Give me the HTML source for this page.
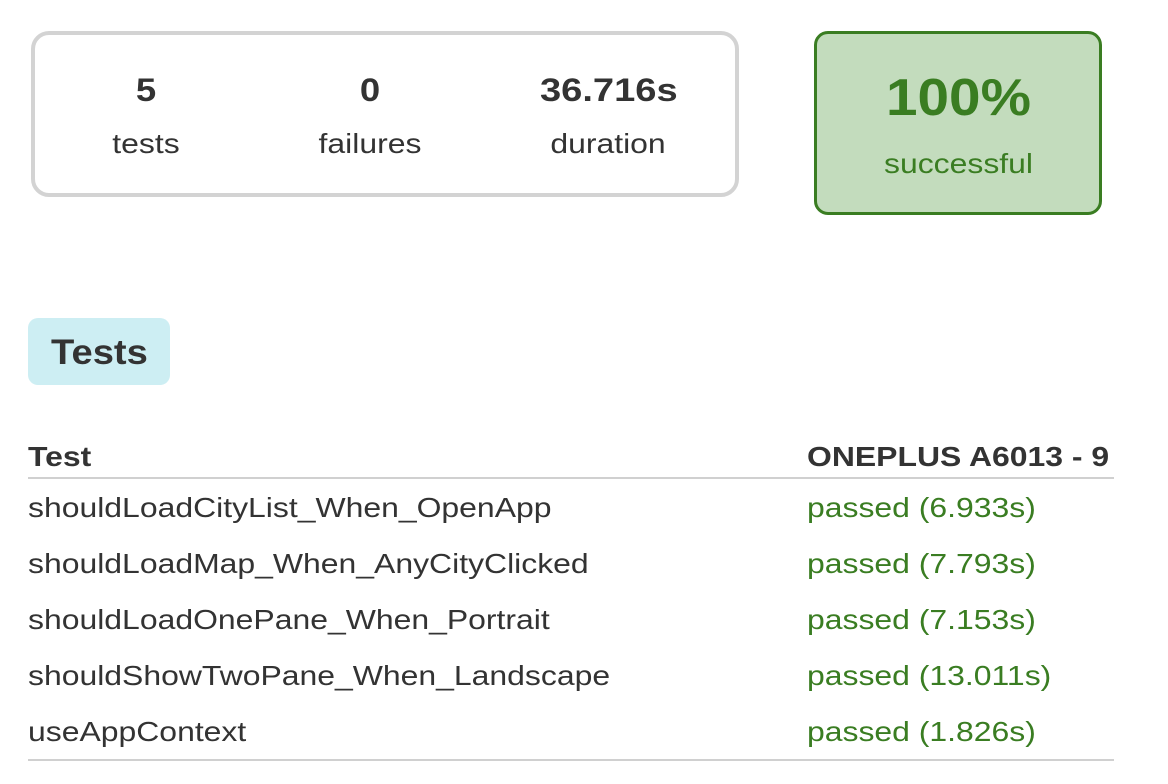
<!DOCTYPE html>
<html><head><style>
body{margin:0;width:1168px;height:784px;background:#fff;font-family:"Liberation Sans",Arial,sans-serif;color:#333;position:relative;overflow:hidden}
.a{position:absolute;white-space:nowrap;transform-origin:0 0;transform:scaleX(1.14)}
.c{transform-origin:0 0;transform:scaleX(1.14) translateX(-50%);text-align:center}
.g{color:#3a7d22}
.box{transform:none}
</style></head><body>
<div class="a box" style="left:31px;top:31px;width:700px;height:158px;border:4px solid #d3d3d3;border-radius:18px"></div>
<div class="a c" style="left:146px;top:72px;font-size:32px;font-weight:bold">5</div>
<div class="a c" style="left:146px;top:128px;font-size:28px">tests</div>
<div class="a c" style="left:370px;top:72px;font-size:32px;font-weight:bold">0</div>
<div class="a c" style="left:370px;top:128px;font-size:28px">failures</div>
<div class="a" style="left:540px;top:72px;font-size:32px;font-weight:bold;transform:scaleX(1.19)">36.716s</div>
<div class="a c" style="left:608px;top:128px;font-size:28px">duration</div>
<div class="a box" style="left:814px;top:31px;width:282px;height:178px;border:3px solid #3a7d22;border-radius:14px;background:#c3dcbd"></div>
<div class="a g" style="left:886px;top:68px;font-size:52px;font-weight:bold;transform:scaleX(1.09)">100%</div>
<div class="a g" style="left:884px;top:148px;font-size:28px">successful</div>
<div class="a box" style="left:28px;top:318px;width:142px;height:67px;background:#cdeef3;border-radius:10px"></div>
<div class="a" style="left:51px;top:333px;font-size:35px;font-weight:bold;transform:scaleX(1.09)">Tests</div>
<div class="a" style="left:28px;top:441px;font-size:28px;font-weight:bold">Test</div>
<div class="a" style="left:807px;top:441px;font-size:28px;font-weight:bold">ONEPLUS A6013 - 9</div>
<div class="a box" style="left:28px;top:477px;width:1086px;height:2px;background:#d0d0d0"></div>
<div class="a" style="left:28px;top:492px;font-size:28px">shouldLoadCityList_When_OpenApp</div>
<div class="a g" style="left:807px;top:492px;font-size:28px">passed (6.933s)</div>
<div class="a" style="left:28px;top:548px;font-size:28px">shouldLoadMap_When_AnyCityClicked</div>
<div class="a g" style="left:807px;top:548px;font-size:28px">passed (7.793s)</div>
<div class="a" style="left:28px;top:604px;font-size:28px">shouldLoadOnePane_When_Portrait</div>
<div class="a g" style="left:807px;top:604px;font-size:28px">passed (7.153s)</div>
<div class="a" style="left:28px;top:660px;font-size:28px">shouldShowTwoPane_When_Landscape</div>
<div class="a g" style="left:807px;top:660px;font-size:28px">passed (13.011s)</div>
<div class="a" style="left:28px;top:716px;font-size:28px">useAppContext</div>
<div class="a g" style="left:807px;top:716px;font-size:28px">passed (1.826s)</div>
<div class="a box" style="left:28px;top:759px;width:1086px;height:2px;background:#d0d0d0"></div>
</body></html>
